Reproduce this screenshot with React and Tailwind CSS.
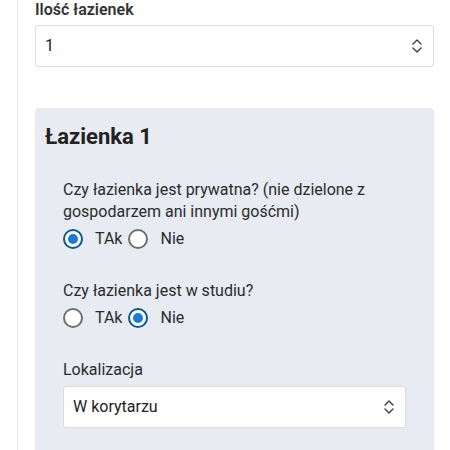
import React from "react";

function Chevrons() {
  return (
    <svg width="10" height="14" viewBox="0 0 10 14" fill="none" stroke="#3a3a3a" strokeWidth="1.3" strokeLinecap="round" strokeLinejoin="round">
      <path d="M1 5 L5 1 L9 5" />
      <path d="M1 9 L5 13 L9 9" />
    </svg>
  );
}

function Select({ value }) {
  return (
    <div className="flex h-[42px] items-center justify-between rounded-[3px] border border-[#dcdcdc] bg-white pl-[9px] pr-[11px]">
      <span className="text-[16px] text-[#222]">{value}</span>
      <Chevrons />
    </div>
  );
}

function Radio({ checked }) {
  return checked ? (
    <div className="flex h-5 w-5 shrink-0 items-center justify-center rounded-full border-2 border-[#0d5a8a] bg-white">
      <div className="h-[10px] w-[10px] rounded-full bg-[#1a7bd3]" />
    </div>
  ) : (
    <div className="h-5 w-5 shrink-0 rounded-full border-2 border-[#6f6f6f] bg-white" />
  );
}

function RadioRow({ yes }) {
  return (
    <div className="mt-1 flex h-6 items-center text-[16px] text-[#2b2b2b]">
      <Radio checked={yes} />
      <span className="ml-3">TAk</span>
      <div className="ml-[6px] flex">
        <Radio checked={!yes} />
      </div>
      <span className="ml-3">Nie</span>
    </div>
  );
}

export default function App() {
  return (
    <div className="min-h-[450px] bg-white font-['Roboto','Liberation_Sans',sans-serif]">
      <div className="ml-[17px] min-h-[450px] border-l border-[#e6e6e6] pl-[17px] pr-4">
        <div className="text-[16px] font-semibold leading-5 text-[#333]">Ilość łazienek</div>
        <div className="mt-[5px]">
          <Select value="1" />
        </div>
        <div className="mt-[41px] rounded-t-[4px] bg-[#e8ebf2] pb-6">
          <div className="px-[10px] pt-[15px] text-[22px] font-bold leading-7 text-[#222]">Łazienka 1</div>
          <div className="px-7">
            <div className="mt-[28px] text-[16px] leading-[22px] text-[#2b2b2b]">
              Czy łazienka jest prywatna? (nie dzielone z gospodarzem ani innymi gośćmi)
            </div>
            <RadioRow yes={true} />
            <div className="mt-[29px] text-[16px] leading-[22px] text-[#2b2b2b]">Czy łazienka jest w studiu?</div>
            <RadioRow yes={false} />
            <div className="mt-[29px] text-[16px] leading-[22px] text-[#2b2b2b]">Lokalizacja</div>
            <div className="mt-[5px]">
              <Select value="W korytarzu" />
            </div>
          </div>
        </div>
      </div>
    </div>
  );
}
